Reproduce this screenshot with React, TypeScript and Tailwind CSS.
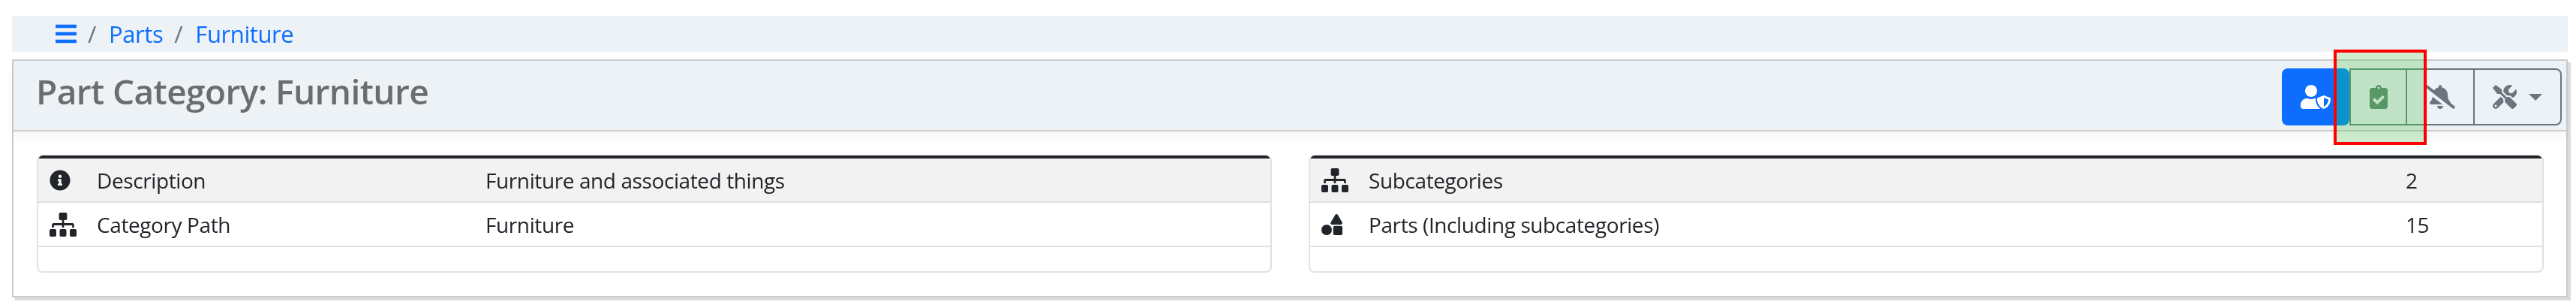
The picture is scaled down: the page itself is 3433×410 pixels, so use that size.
import React from "react";
import { FaBars, FaInfoCircle, FaSitemap, FaShapes, FaUserShield, FaClipboardCheck, FaBellSlash, FaTools } from "react-icons/fa";

const font = { fontFamily: '"Open Sans", "Noto Sans", sans-serif' };

function Row({ icon, label, value, cols, shaded }: { icon: React.ReactNode; label: string; value: string; cols: string; shaded?: boolean }) {
  return (
    <div className={`grid ${cols} items-center h-[59px] border-b-2 border-[#dee2e6] text-[28px] text-[#212529] tracking-[-0.4px] ${shaded ? "bg-[#f2f2f2]" : "bg-white"}`}>
      <div className="pl-[15px] flex items-center">{icon}</div>
      <div>{label}</div>
      <div>{value}</div>
    </div>
  );
}

function Table({ className, children }: { className: string; children: React.ReactNode }) {
  return (
    <div className={`${className} border-2 border-t border-[#e2e2e2] rounded-[8px] overflow-hidden`}>
      <div className="h-1 bg-[#212529]" />
      {children}
      <div className="h-[32px]" />
    </div>
  );
}

export default function App() {
  return (
    <div className="relative bg-white h-[410px] pt-[21px] pl-4 pr-[11px]" style={font}>
      <nav className="h-[48px] bg-[#edf2f7] flex items-center pl-[58px] text-[31px] tracking-[-0.4px]">
        <FaBars className="w-[28px] h-[32px] text-[#0d6efd]" />
        <span className="text-[#6c757d] ml-[15px] mr-[17px]">/</span>
        <span className="text-[#0d6efd]">Parts</span>
        <span className="text-[#6c757d] ml-[15px] mr-[17px]">/</span>
        <span className="text-[#0d6efd]">Furniture</span>
      </nav>
      <section className="mt-[10px] h-[317px] border-2 border-[#cccccc] shadow-[4px_4px_0_#dddddd] bg-white">
        <header className="h-[94px] bg-[#edf2f7] border-b-2 border-[#cccccc] flex items-start justify-between pl-[30px] pr-[6px] pt-[8px] shadow-[0_8px_16px_rgba(0,0,0,0.04)]">
          <h1 className="text-[46px] leading-[64px] font-semibold text-[#6c6c6c] tracking-[-0.6px]">Part Category: Furniture</h1>
          <div className="flex h-[76px] mt-[2px]">
            <button className="w-[90px] bg-[#0d6efd] rounded-[8px] flex items-center justify-center text-white">
              <FaUserShield className="w-[40px] h-[32px]" />
            </button>
            <button className="w-[75px] border-y-2 border-l-2 border-[#6c757d] flex items-center justify-center text-[#6c757d]">
              <FaClipboardCheck className="w-[24px] h-[32px]" />
            </button>
            <button className="w-[90px] border-y-2 border-l-2 border-[#6c757d] flex items-center justify-center text-[#6c757d]">
              <FaBellSlash className="w-[40px] h-[32px]" />
            </button>
            <button className="w-[118px] border-2 border-[#6c757d] rounded-r-[8px] flex items-center justify-center gap-[16px] text-[#6c757d]">
              <FaTools className="w-[32px] h-[32px]" />
              <span className="w-0 h-0 border-x-[9px] border-x-transparent border-t-[9px] border-t-[#6c757d]" />
            </button>
          </div>
        </header>
        <div className="flex gap-[49px] pt-[31px] pl-[31px] pr-[30px]">
          <Table className="w-[1646px]">
            <Row shaded cols="grid-cols-[78px_518px_1fr]" icon={<FaInfoCircle className="w-[28px] h-[28px]" />} label="Description" value="Furniture and associated things" />
            <Row cols="grid-cols-[78px_518px_1fr]" icon={<FaSitemap preserveAspectRatio="none" className="w-[36px] h-[32px]" />} label="Category Path" value="Furniture" />
          </Table>
          <Table className="flex-1">
            <Row shaded cols="grid-cols-[78px_1382px_1fr]" icon={<FaSitemap preserveAspectRatio="none" className="w-[36px] h-[32px]" />} label="Subcategories" value="2" />
            <Row cols="grid-cols-[78px_1382px_1fr]" icon={<FaShapes className="w-[28px] h-[28px]" />} label="Parts (Including subcategories)" value="15" />
          </Table>
        </div>
      </section>
      <div className="absolute left-[3110px] top-[66px] w-[124px] h-[127px]">
        <div className="absolute inset-0 bg-[#005600] mix-blend-screen" />
        <div className="absolute inset-0 bg-[#cfeccf] mix-blend-multiply" />
        <div className="absolute inset-0 border-4 border-[#ff0000]" />
      </div>
    </div>
  );
}
